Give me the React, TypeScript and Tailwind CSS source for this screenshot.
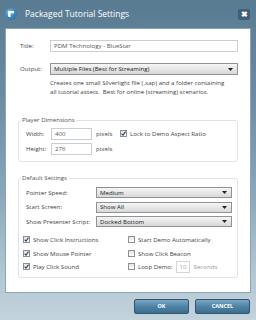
import { JSX } from "react";

function TextBox({ value, className = "" }: { value: string; className?: string }): JSX.Element {
  return (
    <div
      className={`flex items-center border border-[#c9cfd3] bg-white px-[3px] text-[#555] ${className}`}
    >
      {value}
    </div>
  );
}

function Select({ value, className = "" }: { value: string; className?: string }): JSX.Element {
  return (
    <div
      className={`flex items-center justify-between border border-[#8d9396] bg-[linear-gradient(180deg,#f6f6f6_0%,#e6e6e6_50%,#d9d9d9_100%)] px-[3px] text-[#222] ${className}`}
    >
      <span>{value}</span>
      <svg width="5" height="3" viewBox="0 0 5 3" className="mr-[1px]">
        <path d="M0 0 L5 0 L2.5 3 Z" fill="#222" />
      </svg>
    </div>
  );
}

function Checkbox({ checked, label }: { checked?: boolean; label: string }): JSX.Element {
  return (
    <div className="flex items-center gap-[3px]">
      <div className="flex h-[7px] w-[7px] items-center justify-center border border-[#8f8f8f] bg-[linear-gradient(180deg,#e4e4e4,#ffffff)]">
        {checked && (
          <svg width="5" height="5" viewBox="0 0 5 5">
            <path d="M0.6 2.6 L2 4.2 L4.5 0.6" stroke="#1f3f7a" strokeWidth="1.1" fill="none" />
          </svg>
        )}
      </div>
      <span className="text-[#444]">{label}</span>
    </div>
  );
}

function GroupBox({ title, children, className = "" }: { title: string; children: React.ReactNode; className?: string }): JSX.Element {
  return (
    <fieldset className={`rounded-[3px] border border-[#dde3e7] pl-[2px] ${className}`}>
      <legend className="px-[1px] leading-[8px] text-[#555]">{title}</legend>
      {children}
    </fieldset>
  );
}

export default function App(): JSX.Element {
  return (
    <div className="flex h-[320px] w-[256px] flex-col bg-[linear-gradient(180deg,#587b92_0%,#6a8ca2_30%,#88a7ba_60%,#b2c6d2_85%,#c4d3dc_100%)] px-[5px] font-['Open_Sans',sans-serif] text-[6.1px]">
      {/* Title bar */}
      <div className="flex h-[28px] items-center">
        <svg width="12" height="12" viewBox="0 0 12 12" className="mb-[1px]">
          <defs>
            <radialGradient id="lg" cx="0.35" cy="0.3" r="0.8">
              <stop offset="0" stopColor="#6fb7e6" />
              <stop offset="1" stopColor="#1f6ea8" />
            </radialGradient>
          </defs>
          <circle cx="6" cy="6" r="5.8" fill="url(#lg)" />
          <path d="M3 3.4 Q3 3 3.6 3 L9 3 L9 5.2 L5.6 5.2 L5.6 9 L4.2 9 Q3 9 3 7.8 Z" fill="#fff" />
        </svg>
        <span className="ml-[8px] text-[8.5px] text-white">Packaged Tutorial Settings</span>
        <div className="ml-auto mr-[1px] flex h-[11px] w-[12px] items-center justify-center rounded-[2px] bg-[#3f6178] text-[8px] font-bold leading-none text-white">
          ✖
        </div>
      </div>

      {/* Content panel */}
      <div className="flex h-[265px] flex-col border border-[#8aa5b7] bg-white pl-[12px] pr-[12px] pt-[11px]">
        <div className="flex items-center">
          <span className="w-[32px] pl-[2px] text-[#444]">Title:</span>
          <TextBox value="PDM Technology - BlueStar" className="h-[12px] flex-1" />
        </div>
        <div className="mt-[11px] flex items-center">
          <span className="w-[32px] pl-[2px] text-[#444]">Output:</span>
          <Select value="Multiple Files (Best for Streaming)" className="h-[12px] flex-1" />
        </div>
        <div className="ml-[32px] mt-[3px] leading-[9px] text-[#444]">
          <div>Creates one small Silverlight file (.xap) and a folder containing</div>
          <div>all tutorial assets.&nbsp; Best for online (streaming) scenarios.</div>
        </div>

        <GroupBox title="Player Dimensions" className="mt-[20px]">
          <div className="flex flex-col gap-[3px] pb-[6px] pl-[5px] pt-[4px]">
            <div className="flex items-center">
              <span className="w-[25px] text-[#444]">Width:</span>
              <TextBox value="400" className="h-[12px] w-[41px]" />
              <span className="ml-[4px] w-[24px] text-[#444]">pixels</span>
              <Checkbox checked label="Lock to Demo Aspect Ratio" />
            </div>
            <div className="flex items-center">
              <span className="w-[25px] text-[#444]">Height:</span>
              <TextBox value="276" className="h-[12px] w-[41px]" />
              <span className="ml-[4px] text-[#444]">pixels</span>
            </div>
          </div>
        </GroupBox>

        <GroupBox title="Default Settings" className="mt-[12px]">
          <div className="flex flex-col pb-[5px] pr-[5px] pt-[5px]">
            <div className="flex flex-col gap-[3.5px] pl-[5px]">
              {[
                ["Pointer Speed:", "Medium"],
                ["Start Screen:", "Show All"],
                ["Show Presenter Script:", "Docked Bottom"],
              ].map(([label, value]) => (
                <div key={label} className="flex items-center">
                  <span className="w-[70px] text-[#444]">{label}</span>
                  <Select value={value} className="h-[11px] flex-1" />
                </div>
              ))}
            </div>
            <div className="mt-[8px] grid grid-cols-[105px_1fr] gap-y-[3.5px] pl-[2px]">
              <div className="flex h-[10px] items-center">
                <Checkbox checked label="Show Click Instructions" />
              </div>
              <div className="flex h-[10px] items-center">
                <Checkbox label="Start Demo Automatically" />
              </div>
              <div className="flex h-[10px] items-center">
                <Checkbox checked label="Show Mouse Pointer" />
              </div>
              <div className="flex h-[10px] items-center">
                <Checkbox label="Show Click Beacon" />
              </div>
              <div className="flex h-[10px] items-center">
                <Checkbox checked label="Play Click Sound" />
              </div>
              <div className="flex h-[10px] items-center">
                <Checkbox label="Loop Demo:" />
                <TextBox value="10" className="ml-[3px] h-[12px] w-[14px] border-[#d6d6d6] text-[#999]" />
                <span className="ml-[4px] text-[#999]">Seconds</span>
              </div>
            </div>
          </div>
        </GroupBox>
      </div>

      {/* Footer */}
      <div className="flex justify-end gap-[6px] pr-[1px] pt-[6px]">
        {["OK", "CANCEL"].map((b) => (
          <div
            key={b}
            className="flex h-[15px] w-[55px] items-center justify-center rounded-[2px] border border-[#30566f] bg-[linear-gradient(180deg,#7aa6c3_0%,#4f83a6_50%,#3c6d8f_100%)] text-[5.5px] font-bold text-white"
          >
            {b}
          </div>
        ))}
      </div>
    </div>
  );
}
